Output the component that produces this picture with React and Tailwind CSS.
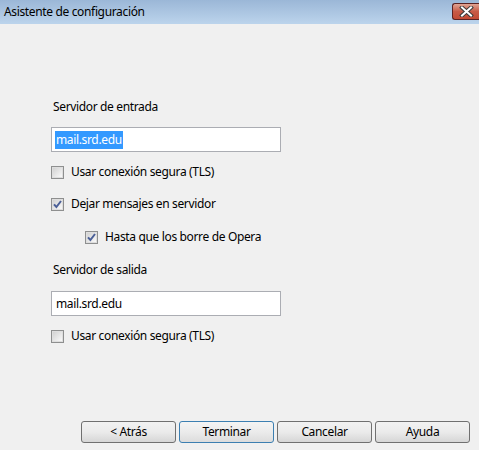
import { useState } from 'react';

// Casilla estilo Windows 7
const Casilla = ({ checked }) => (
  <span className="w-[13px] h-[13px] border border-[#8e8f8f] bg-[#f4f4f4] flex items-center justify-center shrink-0">
    <span className="w-[11px] h-[11px] border border-[#dedede] bg-linear-to-br from-[#d2d2d2] to-[#f9f9f9] flex items-center justify-center">
      {checked && (
        <svg width="9" height="9" viewBox="0 0 9 9">
          <path d="M1 4.3 L3.4 7 L8 1" fill="none" stroke="#4a5f97" strokeWidth="2" />
        </svg>
      )}
    </span>
  </span>
);

const Opcion = ({ checked, label, className = '' }) => (
  <label className={`flex items-center h-[16px] ${className}`}>
    <Casilla checked={checked} />
    <span className="ml-[7px] leading-[16px]">{label}</span>
  </label>
);

const Boton = ({ children, primary }) => (
  <button
    className={`w-[95px] h-[22px] rounded-[3px] border leading-none bg-linear-to-b ${
      primary
        ? 'border-[#3c7fb1] from-[#f4f4f4] via-[#ebebeb] to-[#dcdcdc]'
        : 'border-[#707070] from-[#f2f2f2] via-[#ebebeb] to-[#d6d6d6]'
    }`}
  >
    {children}
  </button>
);

const App = () => {
  const [salida, setSalida] = useState('mail.srd.edu');

  return (
    <div className="w-[479px] h-[450px] bg-[#f0f0f0] flex flex-col text-[12px] tracking-[-0.35px] text-black font-['Segoe_UI','Noto_Sans',sans-serif]">
      {/* Barra de título */}
      <div className="h-[24px] flex items-center justify-between pl-[4px] bg-linear-to-b from-[#9bb7d7] to-[#bcd4ec]">
        <span className="leading-none">Asistente de configuración</span>
        <div className="w-[27px] h-[17px] mt-[-2px] rounded-l-[3px] border border-r-0 border-[#5b2222] bg-linear-to-b from-[#e0a494] via-[#c75a46] to-[#c24a34] flex items-center justify-center">
          <svg width="15" height="11" viewBox="0 0 15 11">
            <path d="M3 1.5 L12 9.5 M12 1.5 L3 9.5" stroke="#3b3b3b" strokeWidth="4" strokeLinecap="square" />
            <path d="M3 1.5 L12 9.5 M12 1.5 L3 9.5" stroke="#ffffff" strokeWidth="2" strokeLinecap="square" />
          </svg>
        </div>
      </div>

      {/* Contenido */}
      <div className="flex-1 flex flex-col pl-[51px] pt-[75px]">
        <div className="h-[16px] leading-[16px] pl-[2px]">Servidor de entrada</div>
        <div className="mt-[12px] w-[230px] h-[25px] border border-[#abadb3] bg-white flex items-center pl-[3px]">
          <span className="bg-[#3399ff] text-white px-[1px] leading-[18px]">mail.srd.edu</span>
        </div>
        <Opcion className="mt-[12px]" label="Usar conexión segura (TLS)" />
        <Opcion className="mt-[16px]" checked label="Dejar mensajes en servidor" />
        <Opcion className="mt-[17px] ml-[34px]" checked label="Hasta que los borre de Opera" />
        <div className="mt-[17px] h-[16px] leading-[16px] pl-[2px]">Servidor de salida</div>
        <input
          value={salida}
          onChange={(e) => setSalida(e.target.value)}
          className="mt-[13px] w-[230px] h-[25px] border border-[#abadb3] bg-white pl-[4px] outline-none"
        />
        <Opcion className="mt-[12px]" label="Usar conexión segura (TLS)" />
      </div>

      {/* Botones */}
      <div className="flex justify-end gap-[3px] pr-[9px] pb-[7px]">
        <Boton>&lt; Atrás</Boton>
        <Boton primary>Terminar</Boton>
        <Boton>Cancelar</Boton>
        <Boton>Ayuda</Boton>
      </div>
    </div>
  );
};

export default App;
